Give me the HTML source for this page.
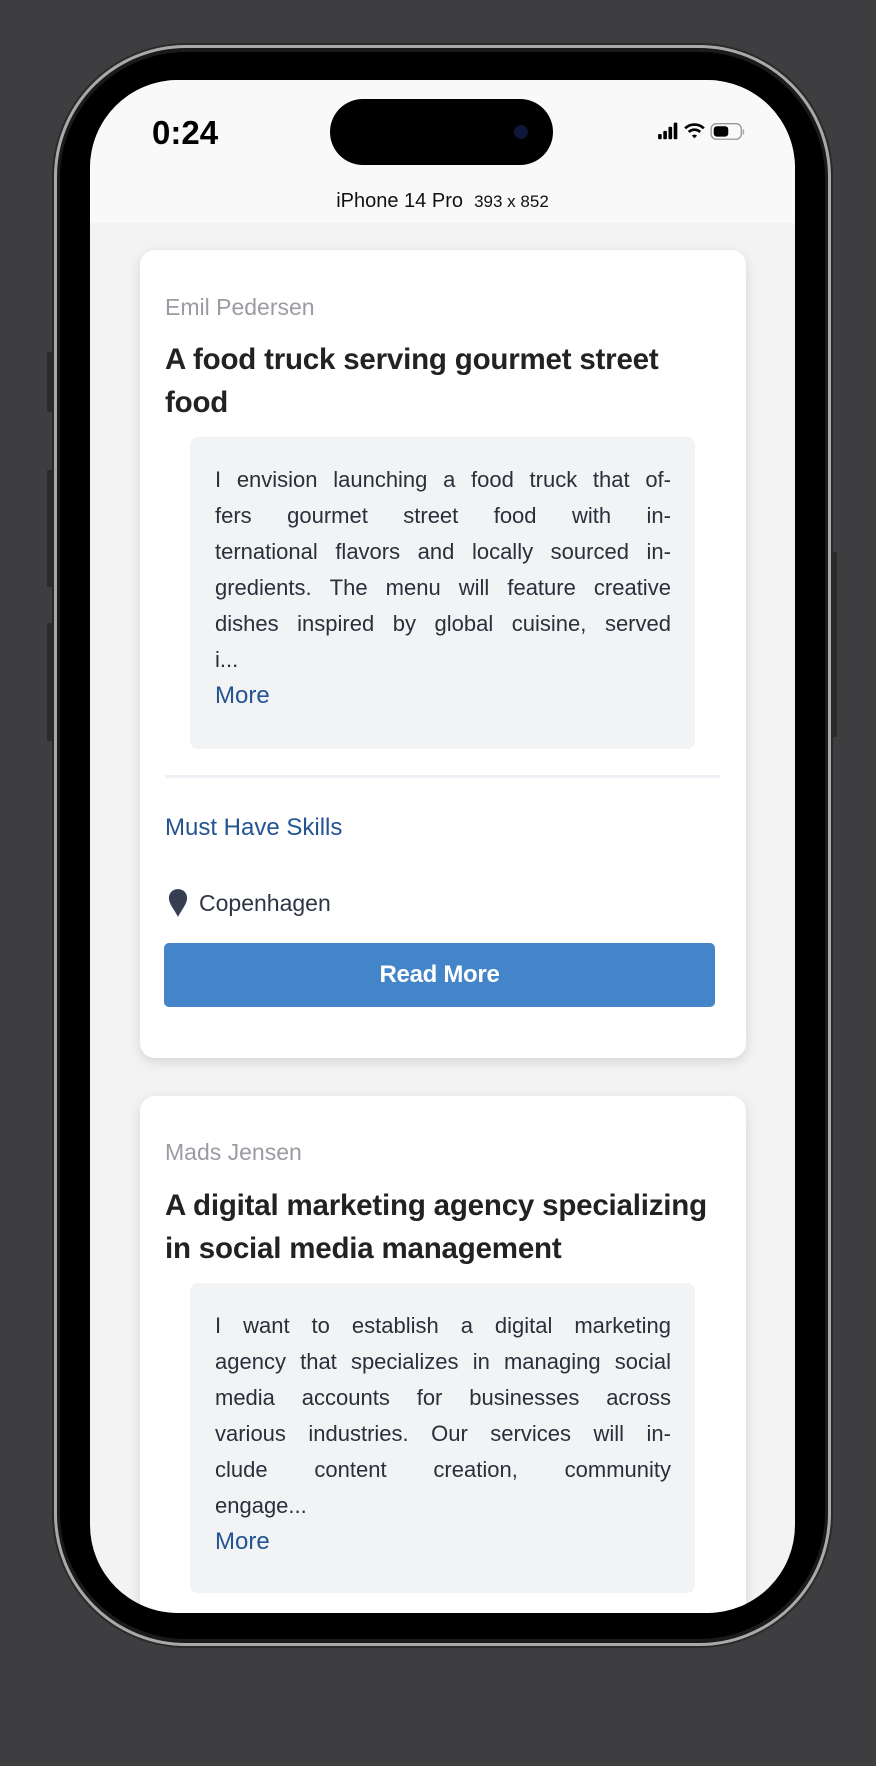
<!DOCTYPE html>
<html><head><meta charset="utf-8"><style>
*{margin:0;padding:0;box-sizing:border-box}
html,body{width:876px;height:1766px;background:#3e3e40;overflow:hidden;font-family:"Liberation Sans",sans-serif}
.abs{position:absolute}
.phone{left:54px;top:45px;width:777px;height:1601px;border-radius:132px;background:#1a1a1a;border:3px solid #a9a9ab;box-shadow:0 0 0 2px #2a2a2a}
.bezel{left:60px;top:52px;width:765px;height:1587px;border-radius:126px;background:#000}
.screen{left:90px;top:80px;width:705px;height:1533px;border-radius:88px;background:#f3f3f4;overflow:hidden}
.hdr{left:0;top:0;width:705px;height:143px;background:#f9f9f9}
.card{background:#fff;border-radius:15px;box-shadow:0 4px 12px rgba(0,0,0,.12)}
.author{font-size:23px;color:#9b9ba3;line-height:30px}
.title{font-size:29.5px;font-weight:bold;color:#222;line-height:43px;letter-spacing:-0.2px}
.desc{background:#f2f3f5;border-radius:8px}
.ln{font-size:22px;color:#2b2f3a;line-height:36px;height:36px;white-space:nowrap;width:456px;display:flex;justify-content:space-between}
.ln.l{justify-content:flex-start;gap:6px}
.more{font-size:24px;color:#235493;line-height:36px}
</style></head><body>
<div class="abs" style="left:47px;top:352px;width:6px;height:60px;background:#2a2a2a;border-radius:2px"></div>
<div class="abs" style="left:47px;top:470px;width:6px;height:117px;background:#2a2a2a;border-radius:2px"></div>
<div class="abs" style="left:47px;top:623px;width:6px;height:118px;background:#2a2a2a;border-radius:2px"></div>
<div class="abs" style="left:831px;top:552px;width:6px;height:185px;background:#2a2a2a;border-radius:2px"></div>
<div class="abs phone"></div>
<div class="abs bezel"></div>
<div class="abs screen">
  <div class="abs hdr"></div>
  <div class="abs" style="left:62px;top:34px;font-size:33px;font-weight:bold;color:#000">0:24</div>
  <div class="abs" style="left:240px;top:19px;width:223px;height:66px;border-radius:33px;background:#000"></div>
  <div class="abs" style="left:424px;top:45px;width:14px;height:14px;border-radius:7px;background:#10163a"></div>
  <svg class="abs" style="left:566px;top:40px" width="104" height="26" viewBox="0 0 100 24">
    <rect x="2" y="13" width="3.5" height="5" rx="1" fill="#000"/><rect x="7" y="10" width="3.5" height="8" rx="1" fill="#000"/><rect x="12" y="6" width="3.5" height="12" rx="1" fill="#000"/><rect x="17" y="2" width="3.5" height="16" rx="1" fill="#000"/>
    <path d="M28 7.5a13 13 0 0 1 18 0" stroke="#000" stroke-width="2.6" fill="none"/><path d="M31.5 11a8 8 0 0 1 11 0" stroke="#000" stroke-width="2.6" fill="none"/><path d="M34.5 14.5 L37 17 L39.5 14.5 a4 4 0 0 0 -5 0z" fill="#000"/>
    <rect x="53" y="3" width="29" height="15" rx="5" fill="none" stroke="#999" stroke-width="1.3"/><rect x="55.5" y="5.5" width="14" height="10" rx="3" fill="#000"/><path d="M84 8.5v5" stroke="#aaa" stroke-width="1.5"/>
  </svg>
  <div class="abs" style="left:0;width:705px;top:110px;text-align:center;font-size:20px;color:#111">iPhone 14 Pro&nbsp; <span style="font-size:17px">393 x 852</span></div>

  <!-- card 1 -->
  <div class="abs card" style="left:50px;top:170px;width:606px;height:808px"></div>
  <div class="abs author" style="left:75px;top:212px">Emil Pedersen</div>
  <div class="abs title" style="left:75px;top:258px">A food truck serving gourmet street<br>food</div>
  <div class="abs desc" style="left:100px;top:357px;width:505px;height:312px"></div>
  <div class="abs" style="left:125px;top:382px">
    <div class="ln"><span>I</span><span>envision</span><span>launching</span><span>a</span><span>food</span><span>truck</span><span>that</span><span>of-</span></div>
    <div class="ln"><span>fers</span><span>gourmet</span><span>street</span><span>food</span><span>with</span><span>in-</span></div>
    <div class="ln"><span>ternational</span><span>flavors</span><span>and</span><span>locally</span><span>sourced</span><span>in-</span></div>
    <div class="ln"><span>gredients.</span><span>The</span><span>menu</span><span>will</span><span>feature</span><span>creative</span></div>
    <div class="ln"><span>dishes</span><span>inspired</span><span>by</span><span>global</span><span>cuisine,</span><span>served</span></div>
    <div class="ln l"><span>i...</span></div>
    <div class="more">More</div>
  </div>
  <div class="abs" style="left:75px;top:695px;width:555px;height:3px;background:#eef1f6"></div>
  <div class="abs" style="left:75px;top:733px;font-size:24px;color:#235493;line-height:30px">Must Have Skills</div>
  <svg class="abs" style="left:77px;top:808px" width="22" height="30" viewBox="0 0 20 28"><path d="M10 1C4.8 1 1.5 4.8 1.5 9.5 1.5 15 7 21 10 27 13 21 18.5 15 18.5 9.5 18.5 4.8 15.2 1 10 1z" fill="#363f52"/></svg>
  <div class="abs" style="left:109px;top:808px;font-size:23px;color:#2f3545;line-height:30px">Copenhagen</div>
  <div class="abs" style="left:74px;top:863px;width:551px;height:64px;border-radius:5px;background:#4484c9;color:#fff;font-size:24px;font-weight:bold;text-align:center;line-height:64px;letter-spacing:-0.3px">Read More</div>

  <!-- card 2 -->
  <div class="abs card" style="left:50px;top:1016px;width:606px;height:700px"></div>
  <div class="abs author" style="left:75px;top:1057px">Mads Jensen</div>
  <div class="abs title" style="left:75px;top:1104px">A digital marketing agency specializing<br>in social media management</div>
  <div class="abs desc" style="left:100px;top:1203px;width:505px;height:310px"></div>
  <div class="abs" style="left:125px;top:1228px">
    <div class="ln"><span>I</span><span>want</span><span>to</span><span>establish</span><span>a</span><span>digital</span><span>marketing</span></div>
    <div class="ln"><span>agency</span><span>that</span><span>specializes</span><span>in</span><span>managing</span><span>social</span></div>
    <div class="ln"><span>media</span><span>accounts</span><span>for</span><span>businesses</span><span>across</span></div>
    <div class="ln"><span>various</span><span>industries.</span><span>Our</span><span>services</span><span>will</span><span>in-</span></div>
    <div class="ln"><span>clude</span><span>content</span><span>creation,</span><span>community</span></div>
    <div class="ln l"><span>engage...</span></div>
    <div class="more">More</div>
  </div>
</div>
</body></html>
